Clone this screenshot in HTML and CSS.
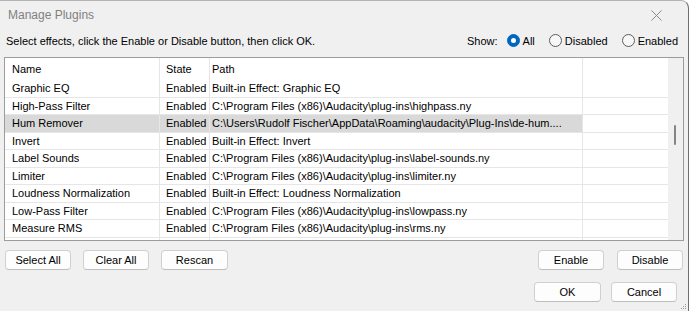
FILE: index.html
```html
<!DOCTYPE html>
<html>
<head>
<meta charset="utf-8">
<link rel="stylesheet" href="styles.css">
</head>
<body>
<div class="window">
  <div class="titlebar">
    <span class="title">Manage Plugins</span>
    <svg class="close" width="11" height="11" viewBox="0 0 11 11"><path d="M0.5 0.5 L10.5 10.5 M10.5 0.5 L0.5 10.5" stroke="#8a8a8a" stroke-width="1" fill="none"/></svg>
  </div>
  <div class="toolbar">
    <span class="hint">Select effects, click the Enable or Disable button, then click OK.</span>
    <div class="show">
      <span class="show-label">Show:</span>
      <span class="radio"><span class="dot checked"></span>All</span>
      <span class="radio"><span class="dot"></span>Disabled</span>
      <span class="radio"><span class="dot"></span>Enabled</span>
    </div>
  </div>
  <div class="list">
    <div class="table">
      <div class="row head"><div class="c name">Name</div><div class="c state">State</div><div class="c path">Path</div><div class="c extra"></div></div>
      <div class="row"><div class="c name">Graphic EQ</div><div class="c state">Enabled</div><div class="c path">Built-in Effect: Graphic EQ</div><div class="c extra"></div></div>
      <div class="row"><div class="c name">High-Pass Filter</div><div class="c state">Enabled</div><div class="c path">C:\Program Files (x86)\Audacity\plug-ins\highpass.ny</div><div class="c extra"></div></div>
      <div class="row sel"><div class="c name">Hum Remover</div><div class="c state">Enabled</div><div class="c path">C:\Users\Rudolf Fischer\AppData\Roaming\audacity\Plug-Ins\de-hum....</div><div class="c extra"></div></div>
      <div class="row"><div class="c name">Invert</div><div class="c state">Enabled</div><div class="c path">Built-in Effect: Invert</div><div class="c extra"></div></div>
      <div class="row"><div class="c name">Label Sounds</div><div class="c state">Enabled</div><div class="c path">C:\Program Files (x86)\Audacity\plug-ins\label-sounds.ny</div><div class="c extra"></div></div>
      <div class="row"><div class="c name">Limiter</div><div class="c state">Enabled</div><div class="c path">C:\Program Files (x86)\Audacity\plug-ins\limiter.ny</div><div class="c extra"></div></div>
      <div class="row"><div class="c name">Loudness Normalization</div><div class="c state">Enabled</div><div class="c path">Built-in Effect: Loudness Normalization</div><div class="c extra"></div></div>
      <div class="row"><div class="c name">Low-Pass Filter</div><div class="c state">Enabled</div><div class="c path">C:\Program Files (x86)\Audacity\plug-ins\lowpass.ny</div><div class="c extra"></div></div>
      <div class="row"><div class="c name">Measure RMS</div><div class="c state">Enabled</div><div class="c path">C:\Program Files (x86)\Audacity\plug-ins\rms.ny</div><div class="c extra"></div></div>
      <div class="row filler"><div class="c name"></div><div class="c state"></div><div class="c path"></div><div class="c extra"></div></div>
    </div>
    <div class="scrollbar"><div class="thumb"></div></div>
  </div>
  <div class="btnrow first">
    <div class="group left">
      <button class="btn">Select All</button>
      <button class="btn">Clear All</button>
      <button class="btn wide">Rescan</button>
    </div>
    <div class="group right">
      <button class="btn">Enable</button>
      <button class="btn">Disable</button>
    </div>
  </div>
  <div class="btnrow second">
    <div class="group ok">
      <button class="btn wide">OK</button>
      <button class="btn">Cancel</button>
    </div>
  </div>
  <svg class="grip" width="6" height="6" viewBox="0 0 6 6"><rect x="4" y="0" width="1" height="1" fill="#9a9a9a"/><rect x="2" y="2" width="1" height="1" fill="#9a9a9a"/><rect x="4" y="2" width="1" height="1" fill="#9a9a9a"/><rect x="0" y="4" width="1" height="1" fill="#9a9a9a"/><rect x="2" y="4" width="1" height="1" fill="#9a9a9a"/><rect x="4" y="4" width="1" height="1" fill="#9a9a9a"/></svg>
</div>
</body>
</html>
```
FILE: styles.css
```css
* { box-sizing: border-box; }
html, body { margin: 0; padding: 0; }
body {
  background: #ffffff;
  font-family: "Liberation Sans", Arial, sans-serif;
  font-size: 11px;
  color: #000;
  width: 690px;
  height: 311px;
  overflow: hidden;
}
.window {
  position: relative;
  width: 689px;
  height: 311px;
  background: #f0f0f0;
  border-top: 1px solid #b4b4b4;
  border-right: 1px solid #6e6e6e;
  border-top-right-radius: 8px;
  display: flex;
  flex-direction: column;
}
.titlebar {
  height: 28px;
  display: flex;
  align-items: center;
  justify-content: space-between;
  padding: 0 26px 0 8px;
}
.title { color: #808080; font-size: 12px; }
.close { display: block; }
.toolbar {
  height: 23px;
  display: flex;
  align-items: center;
  justify-content: space-between;
  padding: 0 10px 0 6px;
}
.show { display: flex; align-items: center; }
.show-label { margin-right: 9px; }
.radio { display: flex; align-items: center; margin-left: 14px; }
.show-label + .radio { margin-left: 0; }
.dot {
  width: 13px;
  height: 13px;
  border-radius: 50%;
  border: 1px solid #5c5c5c;
  background: #f7f7f7;
  margin-right: 3px;
  position: relative;
}
.dot.checked {
  background: #0067c0;
  border-color: #0067c0;
}
.dot.checked::after {
  content: "";
  position: absolute;
  left: 3px;
  top: 3px;
  width: 5px;
  height: 5px;
  border-radius: 50%;
  background: #fff;
}
.list {
  margin: 5px 0 0 4px;
  width: 680px;
  height: 184px;
  border: 1px solid #9c9c9c;
  display: flex;
  background: #fff;
}
.table {
  width: 663px;
  display: flex;
  flex-direction: column;
  background: #fff;
  overflow: hidden;
}
.row {
  display: flex;
  height: 17.5px;
  border-bottom: 1px solid #e6e6e6;
  flex: none;
}
.row.head { height: 22px; border-bottom: none; }
.row.filler { flex: 1; border-bottom: none; }
.c {
  height: 100%;
  border-right: 1px solid #e6e6e6;
  white-space: nowrap;
  overflow: hidden;
  display: flex;
  align-items: center;
  flex: none;
}
.name { width: 155px; padding-left: 7px; }
.state { width: 50px; padding-left: 6px; }
.path { width: 373px; padding-left: 2px; }
.extra { width: 85px; border-right: none; }
.row.sel .name, .row.sel .state, .row.sel .path { background: #d9d9d9; }
.scrollbar {
  width: 15px;
  background: #f0f0f0;
  position: relative;
  flex: none;
}
.thumb {
  position: absolute;
  left: 6px;
  top: 67px;
  width: 2px;
  height: 20px;
  border-radius: 1px;
  background: #858585;
}
.btnrow { display: flex; justify-content: space-between; }
.btnrow.first { margin-top: 9px; padding: 0 5px; }
.btnrow.second { margin-top: 12px; justify-content: flex-end; padding-right: 11px; }
.group { display: flex; }
.group.left { gap: 12px; }
.group.right { gap: 13px; }
.group.ok { gap: 10px; }
.btn {
  width: 66px;
  height: 20px;
  padding: 0;
  margin: 0;
  font-family: inherit;
  font-size: 11px;
  color: #000;
  background: #fdfdfd;
  border: 1px solid #d0d0d0;
  border-bottom-color: #bdbdbd;
  border-radius: 4px;
}
.btn.wide { width: 67px; }
.grip { position: absolute; right: 1px; bottom: 1px; }
```
